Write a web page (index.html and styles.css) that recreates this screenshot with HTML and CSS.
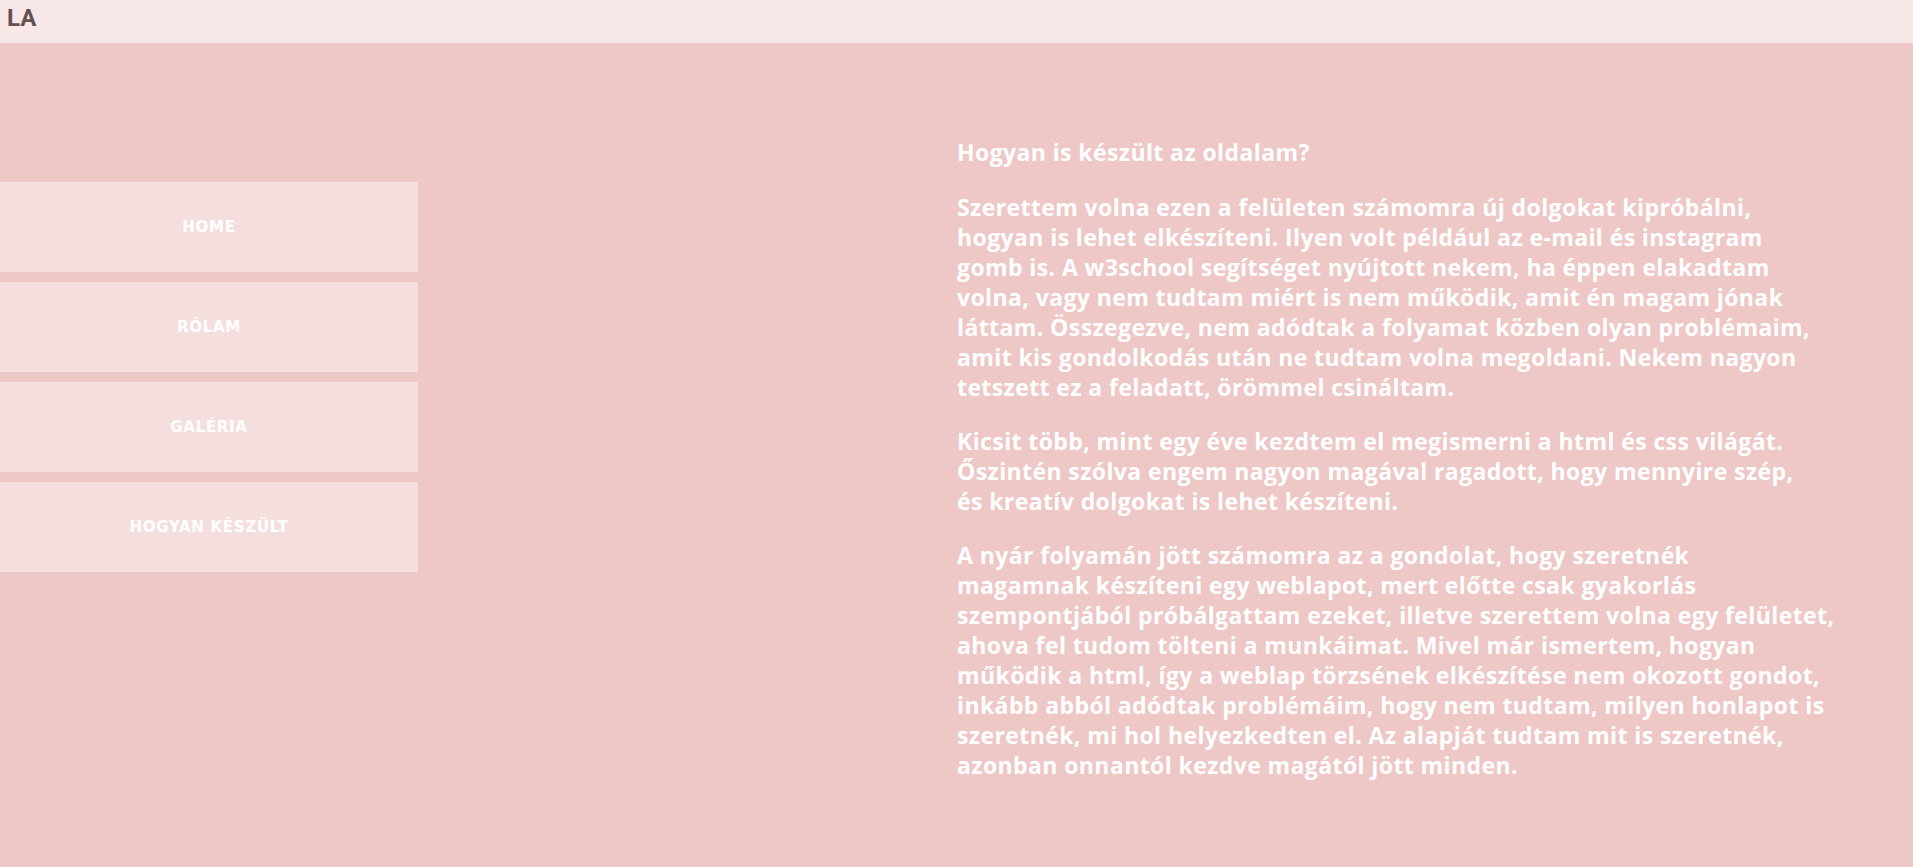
FILE: index.html
```html
<!DOCTYPE html>
<html lang="hu">
<head>
<meta charset="utf-8">
<title>LA</title>
<link rel="stylesheet" href="styles.css">
</head>
<body>
<header class="topbar"><span class="logo">LA</span></header>
<div class="page">
  <nav class="menu">
    <a class="menu-item" href="#">Home</a>
    <a class="menu-item" href="#">Rólam</a>
    <a class="menu-item" href="#">Galéria</a>
    <a class="menu-item" href="#">Hogyan készült</a>
  </nav>
  <main class="content">
    <h2 class="title">Hogyan is készült az oldalam?</h2>
    <p class="text">Szerettem volna ezen a felületen számomra új dolgokat kipróbálni,<br>hogyan is lehet elkészíteni. Ilyen volt például az e-mail és instagram<br>gomb is. A w3school segítséget nyújtott nekem, ha éppen elakadtam<br>volna, vagy nem tudtam miért is nem működik, amit én magam jónak<br>láttam. Összegezve, nem adódtak a folyamat közben olyan problémaim,<br>amit kis gondolkodás után ne tudtam volna megoldani. Nekem nagyon<br>tetszett ez a feladatt, örömmel csináltam.</p>
    <p class="text">Kicsit több, mint egy éve kezdtem el megismerni a html és css világát.<br>Őszintén szólva engem nagyon magával ragadott, hogy mennyire szép,<br>és kreatív dolgokat is lehet készíteni.</p>
    <p class="text">A nyár folyamán jött számomra az a gondolat, hogy szeretnék<br>magamnak készíteni egy weblapot, mert előtte csak gyakorlás<br>szempontjából próbálgattam ezeket, illetve szerettem volna egy felületet,<br>ahova fel tudom tölteni a munkáimat. Mivel már ismertem, hogyan<br>működik a html, így a weblap törzsének elkészítése nem okozott gondot,<br>inkább abból adódtak problémáim, hogy nem tudtam, milyen honlapot is<br>szeretnék, mi hol helyezkedten el. Az alapját tudtam mit is szeretnék,<br>azonban onnantól kezdve magától jött minden.</p>
  </main>
</div>
</body>
</html>
```

FILE: styles.css
```css
* { box-sizing: border-box; }
html, body { margin: 0; padding: 0; }
body {
  background: #eec8c6;
  min-height: 867px;
  overflow: hidden;
}
.topbar {
  height: 43px;
  background: #f8e7e7;
  display: flex;
  align-items: center;
  padding: 0 7px;
}
.logo {
  font-family: Roboto, "Liberation Sans", sans-serif;
  font-weight: 700;
  font-size: 24px;
  color: #654f50;
  line-height: 1;
  margin-top: -7px;
}
.page {
  display: grid;
  grid-template-columns: 957px 1fr;
}
.menu {
  display: flex;
  flex-direction: column;
  gap: 10px;
  width: 418px;
  margin-top: 139px;
}
.menu-item {
  height: 90px;
  background: #f5dfde;
  display: flex;
  align-items: center;
  justify-content: center;
  font-family: "DejaVu Sans", Verdana, sans-serif;
  font-weight: 700;
  font-size: 15px;
  letter-spacing: 0.7px;
  color: #ffffff;
  text-decoration: none;
  text-transform: uppercase;
}
.content {
  padding-top: 94px;
  font-family: "Open Sans", Lato, sans-serif;
  font-weight: 700;
  color: #ffffff;
  font-size: 23px;
  line-height: 30px;
  letter-spacing: 0.4px;
  white-space: nowrap;
}
.title {
  margin: 0 0 25px;
  font-size: 23px;
  font-weight: 700;
  line-height: 30px;
}
.text {
  margin: 0 0 24px;
}
```
